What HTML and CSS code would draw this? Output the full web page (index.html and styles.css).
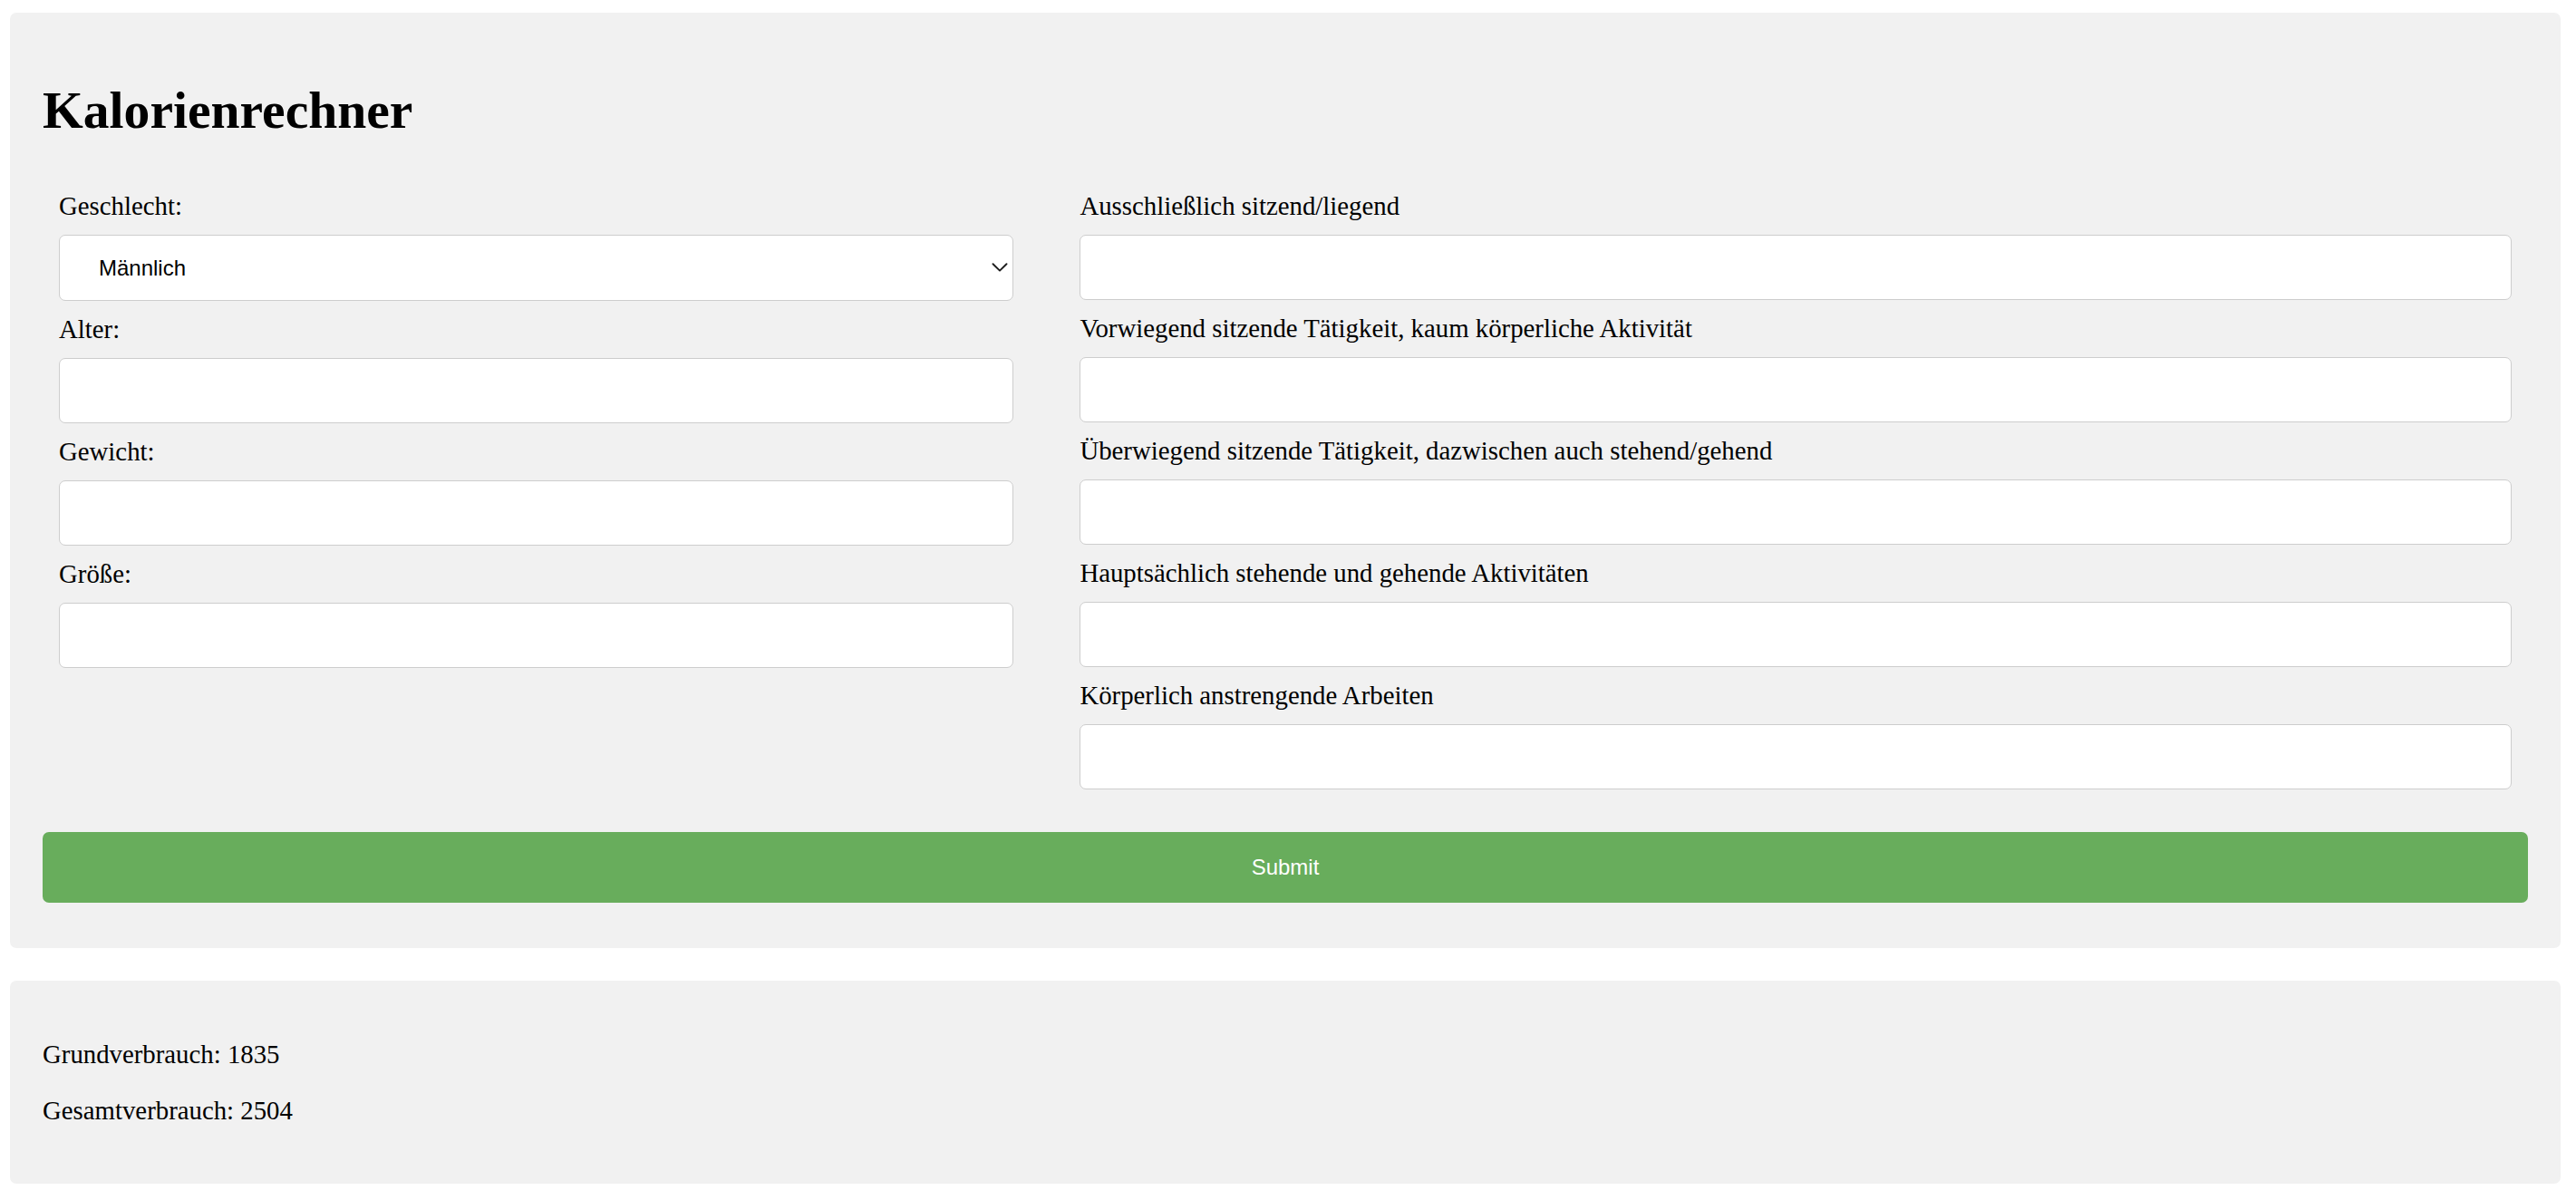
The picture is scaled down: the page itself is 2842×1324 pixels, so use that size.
FILE: index.html
```html
<!DOCTYPE html>
<html lang="de">
<head>
<meta charset="utf-8">
<title>Kalorienrechner</title>
<link rel="stylesheet" href="styles.css">
</head>
<body>
  <section class="card">
    <h1 class="title">Kalorienrechner</h1>
    <form class="calc-form">
      <div class="columns">
        <div class="column">
          <label class="field-label" for="geschlecht">Geschlecht:</label>
          <div class="select-wrap">
            <select class="field-input field-select" id="geschlecht">
              <option>Männlich</option>
              <option>Weiblich</option>
            </select>
            <svg class="chevron" width="18" height="10" viewBox="0 0 18 10" aria-hidden="true"><path d="M1.5 1.2 L9 8.6 L16.5 1.2" fill="none" stroke="#1c1c1c" stroke-width="1.9" stroke-linecap="round" stroke-linejoin="round"/></svg>
          </div>
          <label class="field-label" for="alter">Alter:</label>
          <input class="field-input" id="alter" type="text">
          <label class="field-label" for="gewicht">Gewicht:</label>
          <input class="field-input" id="gewicht" type="text">
          <label class="field-label" for="groesse">Größe:</label>
          <input class="field-input" id="groesse" type="text">
        </div>
        <div class="column">
          <label class="field-label" for="a1">Ausschließlich sitzend/liegend</label>
          <input class="field-input" id="a1" type="text">
          <label class="field-label" for="a2">Vorwiegend sitzende Tätigkeit, kaum körperliche Aktivität</label>
          <input class="field-input" id="a2" type="text">
          <label class="field-label" for="a3">Überwiegend sitzende Tätigkeit, dazwischen auch stehend/gehend</label>
          <input class="field-input" id="a3" type="text">
          <label class="field-label" for="a4">Hauptsächlich stehende und gehende Aktivitäten</label>
          <input class="field-input" id="a4" type="text">
          <label class="field-label" for="a5">Körperlich anstrengende Arbeiten</label>
          <input class="field-input" id="a5" type="text">
        </div>
      </div>
      <button class="submit-btn" type="button">Submit</button>
    </form>
  </section>
  <section class="card result">
    <p class="result-line">Grundverbrauch: 1835</p>
    <p class="result-line">Gesamtverbrauch: 2504</p>
  </section>
</body>
</html>
```

FILE: styles.css
```css
html {
  background: #ffffff;
}

body {
  margin: 14px 17px 0 11px;
  font-family: "Liberation Serif", "Times New Roman", serif;
  font-size: 28.8px;
  color: #000;
}

.card {
  background: #f1f1f1;
  border-radius: 7px;
  padding: 36px;
  margin-bottom: 36px;
}

.card.result {
  margin-bottom: 0;
}

.title {
  font-size: 57.6px;
  font-weight: bold;
  margin: 38.6px 0;
  line-height: normal;
}

.calc-form {
  margin: 0;
}

.columns {
  display: grid;
  grid-template-columns: 1089fr 1615fr;
  column-gap: 37px;
  align-items: start;
}

.column {
  padding: 18px;
  min-width: 0;
}

.field-label {
  display: block;
  line-height: 34px;
  font-size: 28.8px;
}

.field-input {
  display: block;
  width: 100%;
  box-sizing: border-box;
  height: 72px;
  margin: 14.5px 0;
  border: 1px solid #cdcdcd;
  border-radius: 7px;
  background: #fff;
  padding: 0 18px;
  font-family: "Liberation Sans", Arial, sans-serif;
  font-size: 24px;
  color: #000;
  outline: none;
}

.select-wrap {
  position: relative;
}

.field-select {
  -webkit-appearance: none;
  appearance: none;
  padding-left: 43px;
  height: 73px;
}

.chevron {
  position: absolute;
  right: 6px;
  top: 50%;
  transform: translateY(-50%);
  pointer-events: none;
}

.submit-btn {
  display: block;
  width: 100%;
  height: 78px;
  margin: 14.4px 0;
  border: none;
  border-radius: 7px;
  background: #68ad5c;
  color: #fff;
  font-family: "Liberation Sans", Arial, sans-serif;
  font-size: 24px;
  cursor: pointer;
}

.result-line {
  margin: 28.8px 0;
  font-size: 28.8px;
}
```
